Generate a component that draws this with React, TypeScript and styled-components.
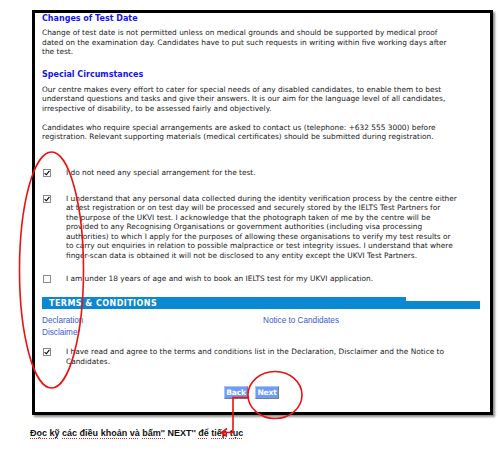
import React from "react";
import styled, { createGlobalStyle } from "styled-components";

const Global = createGlobalStyle`
  html, body { margin: 0; padding: 0; background: #fff; }
  body { width: 500px; height: 453px; overflow: hidden; }
`;

const Page = styled.div`
  position: relative;
  width: 500px;
  height: 453px;
  box-sizing: border-box;
  padding-top: 10px;
  background: #fff;
`;

const Frame = styled.div`
  margin-left: 32px;
  width: 461px;
  height: 405px;
  box-sizing: border-box;
  border: 3px solid #000;
  box-shadow: 2px 2px 2px rgba(0, 0, 0, 0.45);
  padding: 1px 10px 0 7px;
  font-family: "DejaVu Sans", Verdana, sans-serif;
  font-size: 7.4px;
  line-height: 9.5px;
  color: #1a1a1a;
  display: flex;
  flex-direction: column;
`;

const Heading = styled.div<{ $top: number }>`
  margin-top: ${(p) => p.$top}px;
  font-weight: bold;
  font-size: 8px;
  color: #1414f0;
  white-space: nowrap;
`;

const Para = styled.div<{ $top: number }>`
  margin-top: ${(p) => p.$top}px;
  white-space: nowrap;
`;

const CheckRow = styled.div<{ $top: number }>`
  margin-top: ${(p) => p.$top}px;
  display: grid;
  grid-template-columns: 24px 1fr;
  white-space: nowrap;
`;

const Box = styled.span<{ $checked: boolean }>`
  margin: 1px 0 0 1px;
  width: 8px;
  height: 8px;
  box-sizing: border-box;
  border: 1px solid #8a8a8a;
  background: #fff;
  display: flex;
  align-items: center;
  justify-content: center;
`;

const Bar = styled.div`
  margin-top: 14px;
  height: 12px;
  width: 438px;
  box-sizing: border-box;
  padding: 2px 0 0 7px;
  background:
    linear-gradient(100deg, #0a88d0 0, #0a88d0 362px, transparent 363px) left top / 364px 100% no-repeat,
    linear-gradient(#0a88d0, #0a88d0) left 4px / 100% calc(100% - 4px) no-repeat;
  color: #fff;
  font-weight: bold;
  font-size: 8px;
  line-height: 9.5px;
  letter-spacing: 0.45px;
  white-space: nowrap;
`;

const Links = styled.div`
  margin-top: 6px;
  display: grid;
  grid-template-columns: 221px 1fr;
  grid-auto-rows: 12px;
  font-family: "Liberation Sans", Arial, sans-serif;
  font-size: 8.2px;
  line-height: 12px;
  color: #3a5ad4;
`;

const LinkText = styled.span`
  white-space: nowrap;
`;

const Buttons = styled.div`
  margin-top: 20px;
  display: flex;
  justify-content: center;
  gap: 7px;
  padding-right: 19px;
`;

const Btn = styled.span`
  width: 24px;
  height: 13px;
  box-sizing: border-box;
  border: 1px solid;
  border-color: #a8c4fb #7d7d7d #7d7d7d #a8c4fb;
  background: #6c9cf6;
  color: #fff;
  font-family: "DejaVu Sans", Verdana, sans-serif;
  font-weight: bold;
  font-size: 7.6px;
  line-height: 11px;
  letter-spacing: -0.2px;
  text-align: center;
  white-space: nowrap;
`;

const Caption = styled.div`
  margin: 13px 0 0 30px;
  font-family: "Liberation Sans", Arial, sans-serif;
  font-weight: bold;
  font-size: 9px;
  line-height: 11px;
  color: #111;
  white-space: nowrap;
`;

const Spell = styled.span`
  text-decoration: underline dotted #e02020;
  text-decoration-thickness: 1px;
  text-underline-offset: 1.5px;
`;

const Overlay = styled.svg`
  position: absolute;
  left: 0;
  top: 0;
  pointer-events: none;
`;

const Check = () => (
  <svg width="6" height="6" viewBox="0 0 6 6">
    <path d="M0.6 3.1 L2.3 4.8 L5.4 0.9" fill="none" stroke="#000" strokeWidth="1.1" />
  </svg>
);

const CheckItem: React.FC<{ top: number; checked: boolean; children: React.ReactNode }> = ({
  top,
  checked,
  children,
}) => (
  <CheckRow $top={top}>
    <Box $checked={checked}>{checked && <Check />}</Box>
    <div>{children}</div>
  </CheckRow>
);

export default function App() {
  return (
    <Page>
      <Global />
      <Frame>
        <Heading $top={0}>Changes of Test Date</Heading>
        <Para $top={4.5}>
          Change of test date is not permitted unless on medical grounds and should be supported by medical proof
          <br />
          dated on the examination day. Candidates have to put such requests in writing within five working days after
          <br />
          the test.
        </Para>
        <Heading $top={13}>Special Circumstances</Heading>
        <Para $top={5.5}>
          Our centre makes every effort to cater for special needs of any disabled candidates, to enable them to best
          <br />
          understand questions and tasks and give their answers. It is our aim for the language level of all candidates,
          <br />
          irrespective of disability, to be assessed fairly and objectively.
        </Para>
        <Para $top={9.5}>
          Candidates who require special arrangements are asked to contact us (telephone: +632 555 3000) before
          <br />
          registration. Relevant supporting materials (medical certificates) should be submitted during registration.
        </Para>
        <CheckItem top={26} checked>
          I do not need any special arrangement for the test.
        </CheckItem>
        <CheckItem top={16.5} checked>
          I understand that any personal data collected during the identity verification process by the centre either
          <br />
          at test registration or on test day will be processed and securely stored by the IELTS Test Partners for
          <br />
          the purpose of the UKVI test. I acknowledge that the photograph taken of me by the centre will be
          <br />
          provided to any Recognising Organisations or government authorities (including visa processing
          <br />
          authorities) to which I apply for the purposes of allowing these organisations to verify my test results or
          <br />
          to carry out enquiries in relation to possible malpractice or test integrity issues. I understand that where
          <br />
          finger-scan data is obtained it will not be disclosed to any entity except the UKVI Test Partners.
        </CheckItem>
        <CheckItem top={13.5} checked={false}>
          I am under 18 years of age and wish to book an IELTS test for my UKVI application.
        </CheckItem>
        <Bar>TERMS &amp; CONDITIONS</Bar>
        <Links>
          <LinkText>Declaration</LinkText>
          <LinkText>Notice to Candidates</LinkText>
          <LinkText>Disclaimer</LinkText>
        </Links>
        <CheckItem top={8} checked>
          I have read and agree to the terms and conditions list in the Declaration, Disclaimer and the Notice to
          <br />
          Candidates.
        </CheckItem>
        <Buttons>
          <Btn>Back</Btn>
          <Btn>Next</Btn>
        </Buttons>
      </Frame>
      <Caption>
        <Spell>Đọc</Spell> <Spell>kỹ</Spell> <Spell>các</Spell> <Spell>điều</Spell> <Spell>khoản</Spell>{" "}
        <Spell>và</Spell> <Spell>bấm''</Spell> NEXT'' <Spell>để</Spell> <Spell>tiếp</Spell> <Spell>tục</Spell>
      </Caption>
      <Overlay width="500" height="453" viewBox="0 0 500 453">
        <ellipse cx="51.5" cy="270" rx="32" ry="118" fill="none" stroke="#ee1111" strokeWidth="1.6" />
        <ellipse cx="275" cy="395" rx="27" ry="23.5" fill="none" stroke="#ee1111" strokeWidth="1.6" />
        <path d="M249 397.5 H233 V432.5 H222" fill="none" stroke="#ee1111" strokeWidth="1.6" />
        <path d="M227 428.5 L221.5 432.5 L227 436.5" fill="none" stroke="#ee1111" strokeWidth="1.6" />
      </Overlay>
    </Page>
  );
}
